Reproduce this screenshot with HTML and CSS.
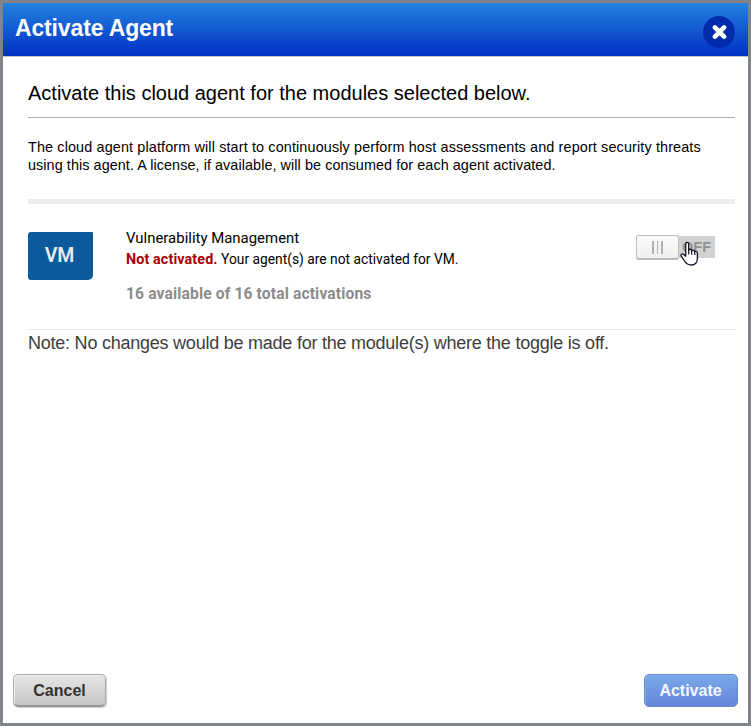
FILE: index.html
```html
<!DOCTYPE html>
<html lang="en">
<head>
<meta charset="utf-8">
<title>Activate Agent</title>
<link rel="stylesheet" href="styles.css">
</head>
<body>
<div class="dialog">
  <header class="header">
    <h1 class="title">Activate Agent</h1>
    <button class="close" aria-label="Close">
      <svg width="32" height="32" viewBox="0 0 32 32"><circle cx="16" cy="16" r="16" fill="#002bac"/><path d="M11.9 11.4L21.1 20.6M21.1 11.4L11.9 20.6" stroke="#fff" stroke-width="4.7" stroke-linecap="round"/></svg>
    </button>
  </header>
  <main class="content">
    <h2 class="heading">Activate this cloud agent for the modules selected below.</h2>
    <p class="intro"><span class="wide">The cloud agent platform will start to continuously perform host assessments and report security threats</span><br><span>using this agent. A license, if available, will be consumed for each agent activated.</span></p>
    <section class="module">
      <div class="badge">VM</div>
      <div class="details">
        <div class="name">Vulnerability Management</div>
        <div class="status"><strong>Not activated.</strong> <span>Your agent(s) are not activated for VM.</span></div>
        <div class="quota">16 available of 16 total activations</div>
      </div>
      <div class="toggle">
        <div class="knob"><i></i><i></i><i></i></div>
        <div class="off">OFF</div>
        <svg class="pointer" width="20" height="26" viewBox="0 0 20 26"><path d="M5.7 15.2V3.2C5.7.8 8.7.8 8.7 3.2V9.2C9.2 7.7 11.6 8 11.7 9.8 12.5 8.7 14.6 9 14.7 10.8 15.8 9.8 17.4 10.5 17.4 12.3V17.2C17.4 21.5 15.2 24 11.2 24 7.6 24 6.1 22.5 4.5 20L1.3 15.2C.2 13.4 2.3 12.2 3.7 13.6Z" fill="#fff" stroke="#101028" stroke-width="1.3" stroke-linejoin="round"/><path d="M8.7 9V13.5M11.7 9.8V13.7M14.7 10.8V14" stroke="#101028" stroke-width="1.2"/></svg>
      </div>
    </section>
    <p class="note">Note: No changes would be made for the module(s) where the toggle is off.</p>
  </main>
  <footer class="footer">
    <button class="button cancel">Cancel</button>
    <button class="button activate">Activate</button>
  </footer>
</div>
</body>
</html>
```
FILE: styles.css
```css
* { box-sizing: border-box; }
html, body { height: 100%; margin: 0; }
body { font-family: "Liberation Sans", Arial, sans-serif; color: #000; }
h1, h2, p { margin: 0; font-weight: normal; }
button { font-family: inherit; cursor: pointer; }
.dialog { height: 726px; border: 3px solid #808388; background: #fff; display: flex; flex-direction: column; }
.header { height: 54px; flex: none; display: flex; justify-content: space-between; padding: 0 13px 0 12px; background: linear-gradient(#2482df, #0030c5); border-bottom: 1px solid #c0c1cb; background-clip: padding-box; }
.title { font-size: 23px; line-height: 26px; padding-top: 12px; font-weight: bold; letter-spacing: -0.15px; color: #fff; }
.close { width: 32px; height: 32px; margin-top: 13px; padding: 0; border: 0; background: none; }
.close svg { display: block; }
.content { flex: 1; padding: 0 13px 0 25px; }
.heading { height: 61px; padding-top: 24px; font-size: 20px; line-height: 24px; border-bottom: 1px solid #afafaf; }
.intro { height: 86px; padding-top: 20px; font-size: 14.4px; line-height: 18px; letter-spacing: 0.07px; border-bottom: 5px solid #ebeef1; white-space: nowrap; }
.wide { letter-spacing: 0.132px; }
.module { height: 126px; display: flex; padding-top: 28px; border-bottom: 1px solid #e8e8e8; font-family: Roboto, sans-serif; }
.badge { width: 65px; height: 48px; background: #0c599b; border-radius: 3px 1px 5px 3px; color: #e4edf5; font-size: 19.5px; font-weight: 600; line-height: 48px; text-align: center; padding-right: 2px; }
.details { flex: 1; padding-left: 33px; white-space: nowrap; }
.name { font-size: 14.95px; line-height: 20px; margin-top: -4px; }
.status { font-size: 13.8px; line-height: 20px; margin-top: 1px; }
.status strong { color: #ac0008; font-weight: bold; font-size: 14.3px; letter-spacing: 0.13px; }
.quota { font-size: 15.6px; line-height: 20px; margin-top: 15px; font-weight: bold; letter-spacing: 0.14px; color: #8c8c8c; }
.toggle { position: relative; display: flex; width: 80px; height: 26px; margin: 3px 19px 0 0; }
.knob { width: 43px; height: 25px; display: flex; justify-content: center; align-items: center; gap: 3px; background: linear-gradient(#fbfbfb, #f0f0f0); border: 1px solid #bdbdbd; border-bottom: 2px solid #b8b8b8; border-radius: 3px; }
.knob i { width: 1.5px; height: 13px; background: #b0b0b0; }
.off { width: 36px; height: 22px; margin-top: 1px; background: #d2d2d2; color: #929292; font: bold 14.5px/22px "Liberation Sans", sans-serif; padding-left: 3px; }
.pointer { position: absolute; left: 44px; top: 6px; }
.note { font-size: 18px; line-height: 22px; padding-top: 2px; letter-spacing: -0.235px; color: #3d3d3d; white-space: nowrap; }
.footer { height: 49px; display: flex; justify-content: space-between; padding: 0 10px; }
.button { height: 33px; border-radius: 5px; font-size: 16px; font-weight: bold; line-height: 20px; padding: 0; }
.cancel { width: 93px; color: #333; padding-top: 1px; background: linear-gradient(#e6e6e6, #c6c6c6); border: 1px solid #adadad; border-bottom: 2px solid #969696; box-shadow: inset 1px 1px 0 #efefef, 1px 1px 1px #ccc; }
.activate { width: 94px; color: #f4f8ff; padding-right: 1px; background: linear-gradient(#7aaae8, #6485db); border: 1px solid #628dca; box-shadow: inset 1px 1px 0 #83b2e9; }
```
